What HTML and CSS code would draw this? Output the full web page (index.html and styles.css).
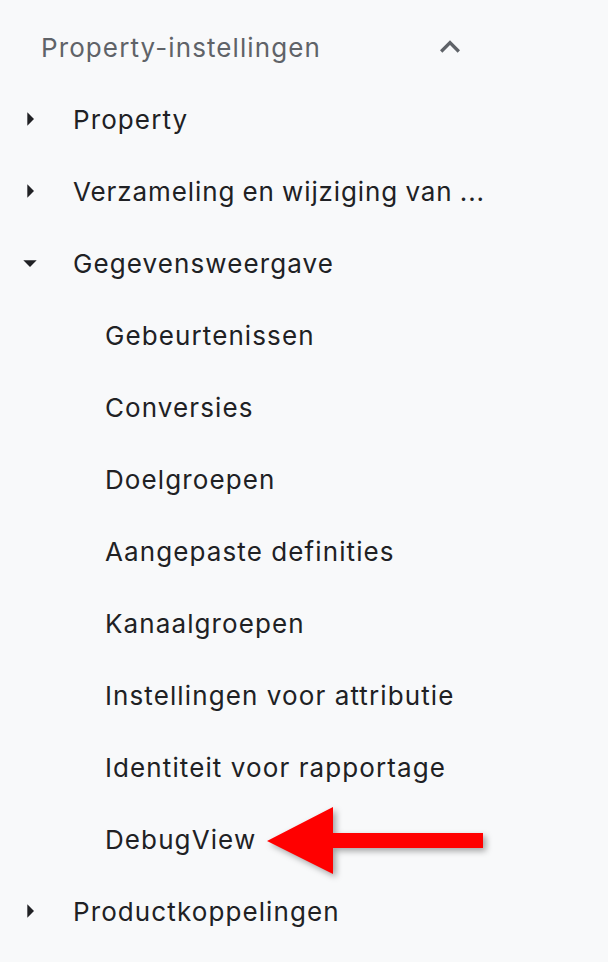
FILE: index.html
```html
<!DOCTYPE html>
<html lang="nl">
<head>
<meta charset="utf-8">
<title>Property-instellingen</title>
<link rel="stylesheet" href="styles.css">
</head>
<body>
<div class="page">
  <div class="header">
    <span class="header-title">Property-instellingen</span>
    <svg class="chevron" viewBox="0 0 24 24"><path d="M12 8l-6 6 1.41 1.41L12 10.83l4.59 4.58L18 14z"/></svg>
  </div>
  <ul class="nav">
    <li class="item"><svg class="caret" viewBox="0 0 24 24"><path d="M10 17l5-5-5-5v10z"/></svg><span>Property</span></li>
    <li class="item"><svg class="caret" viewBox="0 0 24 24"><path d="M10 17l5-5-5-5v10z"/></svg><span class="clip">Verzameling en wijziging van ...</span></li>
    <li class="item"><svg class="caret" viewBox="0 0 24 24"><path d="M7 10l5 5 5-5z"/></svg><span>Gegevensweergave</span></li>
    <li class="sub">Gebeurtenissen</li>
    <li class="sub">Conversies</li>
    <li class="sub">Doelgroepen</li>
    <li class="sub">Aangepaste definities</li>
    <li class="sub">Kanaalgroepen</li>
    <li class="sub">Instellingen voor attributie</li>
    <li class="sub">Identiteit voor rapportage</li>
    <li class="sub">DebugView</li>
    <li class="item"><svg class="caret" viewBox="0 0 24 24"><path d="M10 17l5-5-5-5v10z"/></svg><span>Productkoppelingen</span></li>
  </ul>
  <svg class="pointer" viewBox="0 0 240 90" width="240" height="90">
    <polygon points="7,41 73,7 73,33 223,33 223,48 73,48 73,74"/>
  </svg>
</div>
</body>
</html>
```

FILE: styles.css
```css
html, body {
  margin: 0;
  padding: 0;
  background: #f8f9fa;
}
body {
  font-family: Inter, Roboto, "Noto Sans", sans-serif;
  color: #202124;
}
.page {
  position: relative;
  padding-top: 11px;
  width: 608px;
  height: 962px;
  box-sizing: border-box;
}
.header {
  display: flex;
  align-items: center;
  justify-content: space-between;
  width: 470px;
  height: 72px;
  padding-left: 41px;
  box-sizing: border-box;
}
.header-title {
  font-size: 26px;
  letter-spacing: 1.1px;
  color: #5f6368;
}
.chevron {
  width: 40px;
  height: 40px;
  fill: #5f6368;
}
.nav {
  list-style: none;
  margin: 0;
  padding: 0;
}
.item, .sub {
  display: flex;
  align-items: center;
  height: 72px;
  font-size: 26px;
  letter-spacing: 1.1px;
  white-space: nowrap;
}
.clip {
  letter-spacing: 0.9px;
  word-spacing: -1px;
}
.item {
  padding-left: 14px;
}
.caret {
  width: 32px;
  height: 32px;
  fill: #202124;
  margin-right: 27px;
  flex: none;
}
.sub {
  padding-left: 105px;
}
.pointer {
  position: absolute;
  left: 260px;
  top: 800px;
  overflow: visible;
  filter: drop-shadow(3px 3px 3px rgba(0, 0, 0, 0.35));
}
.pointer polygon {
  fill: #ff0000;
}
```
